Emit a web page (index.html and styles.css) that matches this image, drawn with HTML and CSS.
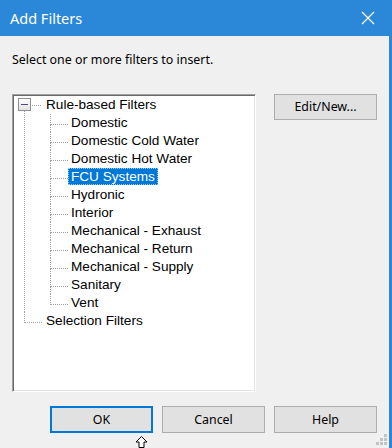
FILE: index.html
```html
<!DOCTYPE html>
<html>
<head>
<meta charset="utf-8">
<link rel="stylesheet" href="styles.css">
</head>
<body>
<div class="window">
  <div class="titlebar">
    <span class="title">Add Filters</span>
    <svg class="close" width="14" height="14" viewBox="0 0 14 14"><path d="M1 1 L13 13 M13 1 L1 13" stroke="#ffffff" stroke-width="1.2" fill="none"/></svg>
  </div>
  <div class="content">
    <div class="instr">Select one or more filters to insert.</div>
    <div class="main">
      <div class="tree">
        <ul class="root">
          <li class="open">
            <span class="toggle"><span class="minus"></span></span><span class="label">Rule-based Filters</span>
            <ul class="children">
              <li><span class="label">Domestic</span></li>
              <li><span class="label">Domestic Cold Water</span></li>
              <li><span class="label">Domestic Hot Water</span></li>
              <li><span class="label selected">FCU Systems</span></li>
              <li><span class="label">Hydronic</span></li>
              <li><span class="label">Interior</span></li>
              <li><span class="label">Mechanical - Exhaust</span></li>
              <li><span class="label">Mechanical - Return</span></li>
              <li><span class="label">Mechanical - Supply</span></li>
              <li><span class="label">Sanitary</span></li>
              <li><span class="label">Vent</span></li>
            </ul>
          </li>
          <li><span class="label">Selection Filters</span></li>
        </ul>
      </div>
      <div class="side">
        <button class="btn">Edit/New...</button>
      </div>
    </div>
    <div class="actions">
      <button class="btn btn-default">OK</button>
      <button class="btn">Cancel</button>
      <button class="btn">Help</button>
    </div>
    <svg class="grip" width="12" height="12" viewBox="0 0 12 12">
      <rect x="8" y="0" width="3" height="3" fill="#c4c4c4"/>
      <rect x="4" y="4" width="3" height="3" fill="#c4c4c4"/>
      <rect x="8" y="4" width="3" height="3" fill="#c4c4c4"/>
      <rect x="0" y="8" width="3" height="3" fill="#c4c4c4"/>
      <rect x="4" y="8" width="3" height="3" fill="#c4c4c4"/>
      <rect x="8" y="8" width="3" height="3" fill="#c4c4c4"/>
    </svg>
    <svg class="cursor" width="13" height="12" viewBox="0 0 13 12">
      <path d="M6.5 0.5 L12 6 L9 6 L9 11.5 L4 11.5 L4 6 L1 6 Z" fill="#ffffff" stroke="#000000" stroke-width="1"/>
    </svg>
  </div>
</div>
</body>
</html>
```

FILE: styles.css
```css
* { box-sizing: border-box; }
html, body { margin: 0; padding: 0; }
body { width: 392px; height: 448px; overflow: hidden; background: #f0f0f0; }

.window {
  width: 392px;
  height: 448px;
  display: flex;
  flex-direction: column;
  background: #f0f0f0;
  border-right: 3px solid #2b88d8;
  font-family: "Noto Sans", "Open Sans", sans-serif;
}

.titlebar {
  height: 36px;
  flex: none;
  background: #2b88d8;
  display: flex;
  align-items: center;
  justify-content: space-between;
  padding: 0 14px 0 10px;
}
.title {
  color: #ffffff;
  font-size: 14.5px;
  line-height: 20px;
  padding-bottom: 1px;
}
.close { display: block; margin-top: -1px; }

.content {
  position: relative;
  flex: 1;
  display: flex;
  flex-direction: column;
}

.instr {
  height: 58px;
  padding: 14px 12px 0;
  font-size: 12.4px;
  line-height: 20px;
  color: #000;
}

.main {
  display: flex;
  gap: 18px;
  padding-left: 12px;
  height: 298px;
}

.tree {
  width: 244px;
  height: 298px;
  background: #ffffff;
  border-top: 1px solid #a0a0a0;
  border-left: 1px solid #a0a0a0;
  border-right: 1px solid #ffffff;
  border-bottom: 1px solid #ffffff;
  box-shadow: inset 1px 1px 0 #696969, inset -1px -1px 0 #e3e3e3;
  padding: 1px;
  font-family: "Liberation Sans", Arial, sans-serif;
  font-size: 13.6px;
  color: #000;
}

.tree ul { list-style: none; margin: 0; padding: 0; }
.tree li { position: relative; line-height: 18px; }

.root > li { padding-left: 29px; }
.root > li::before {
  content: "";
  position: absolute;
  left: 10px;
  top: 9px;
  width: 17px;
  border-top: 1px dotted #a0a0a0;
}
.root > li:not(:last-child)::after {
  content: "";
  position: absolute;
  left: 10px;
  top: 9px;
  bottom: 0;
  border-left: 1px dotted #a0a0a0;
}
.root > li:last-child::before {
  top: 0;
  height: 10px;
  border-top: none;
  border-left: 1px dotted #a0a0a0;
  border-bottom: 1px dotted #a0a0a0;
}

.toggle {
  position: absolute;
  left: 4px;
  top: 2px;
  width: 13px;
  height: 13px;
  border: 1px solid #8e8f8f;
  background: linear-gradient(#ffffff, #e2e2e2);
  z-index: 1;
}
.minus {
  position: absolute;
  left: 2px;
  top: 5px;
  width: 7px;
  height: 1px;
  background: #4a4a8a;
}

.children > li { padding-left: 25px; }
.children > li::before {
  content: "";
  position: absolute;
  left: 7px;
  top: 0;
  width: 17px;
  height: 10px;
  border-left: 1px dotted #a0a0a0;
  border-bottom: 1px dotted #a0a0a0;
}
.children > li:not(:last-child)::after {
  content: "";
  position: absolute;
  left: 7px;
  top: 10px;
  bottom: 0;
  border-left: 1px dotted #a0a0a0;
}

.label {
  display: inline-block;
  height: 17px;
  line-height: 17px;
  padding: 0 3px;
  white-space: nowrap;
  vertical-align: top;
}
.label.selected {
  background: #0078d7;
  color: #ffffff;
  outline: 1px dotted #9cc7ee;
  outline-offset: -1px;
}

.side { padding-top: 0; }

.btn {
  display: block;
  width: 103px;
  height: 26px;
  margin: 0;
  padding: 0;
  background: #e1e1e1;
  border: 1px solid #adadad;
  font-family: "Noto Sans", "Open Sans", sans-serif;
  font-size: 12.4px;
  color: #000;
  line-height: 20px;
}
.btn-default {
  border: 2px solid #0078d7;
}

.actions {
  display: flex;
  justify-content: flex-end;
  gap: 9px;
  padding: 0 12px 0 0;
  margin-top: 14px;
}
.actions .btn { height: 27px; }

.grip {
  position: absolute;
  right: 1px;
  bottom: 2px;
}
.cursor {
  position: absolute;
  left: 135px;
  bottom: 0;
}
```
